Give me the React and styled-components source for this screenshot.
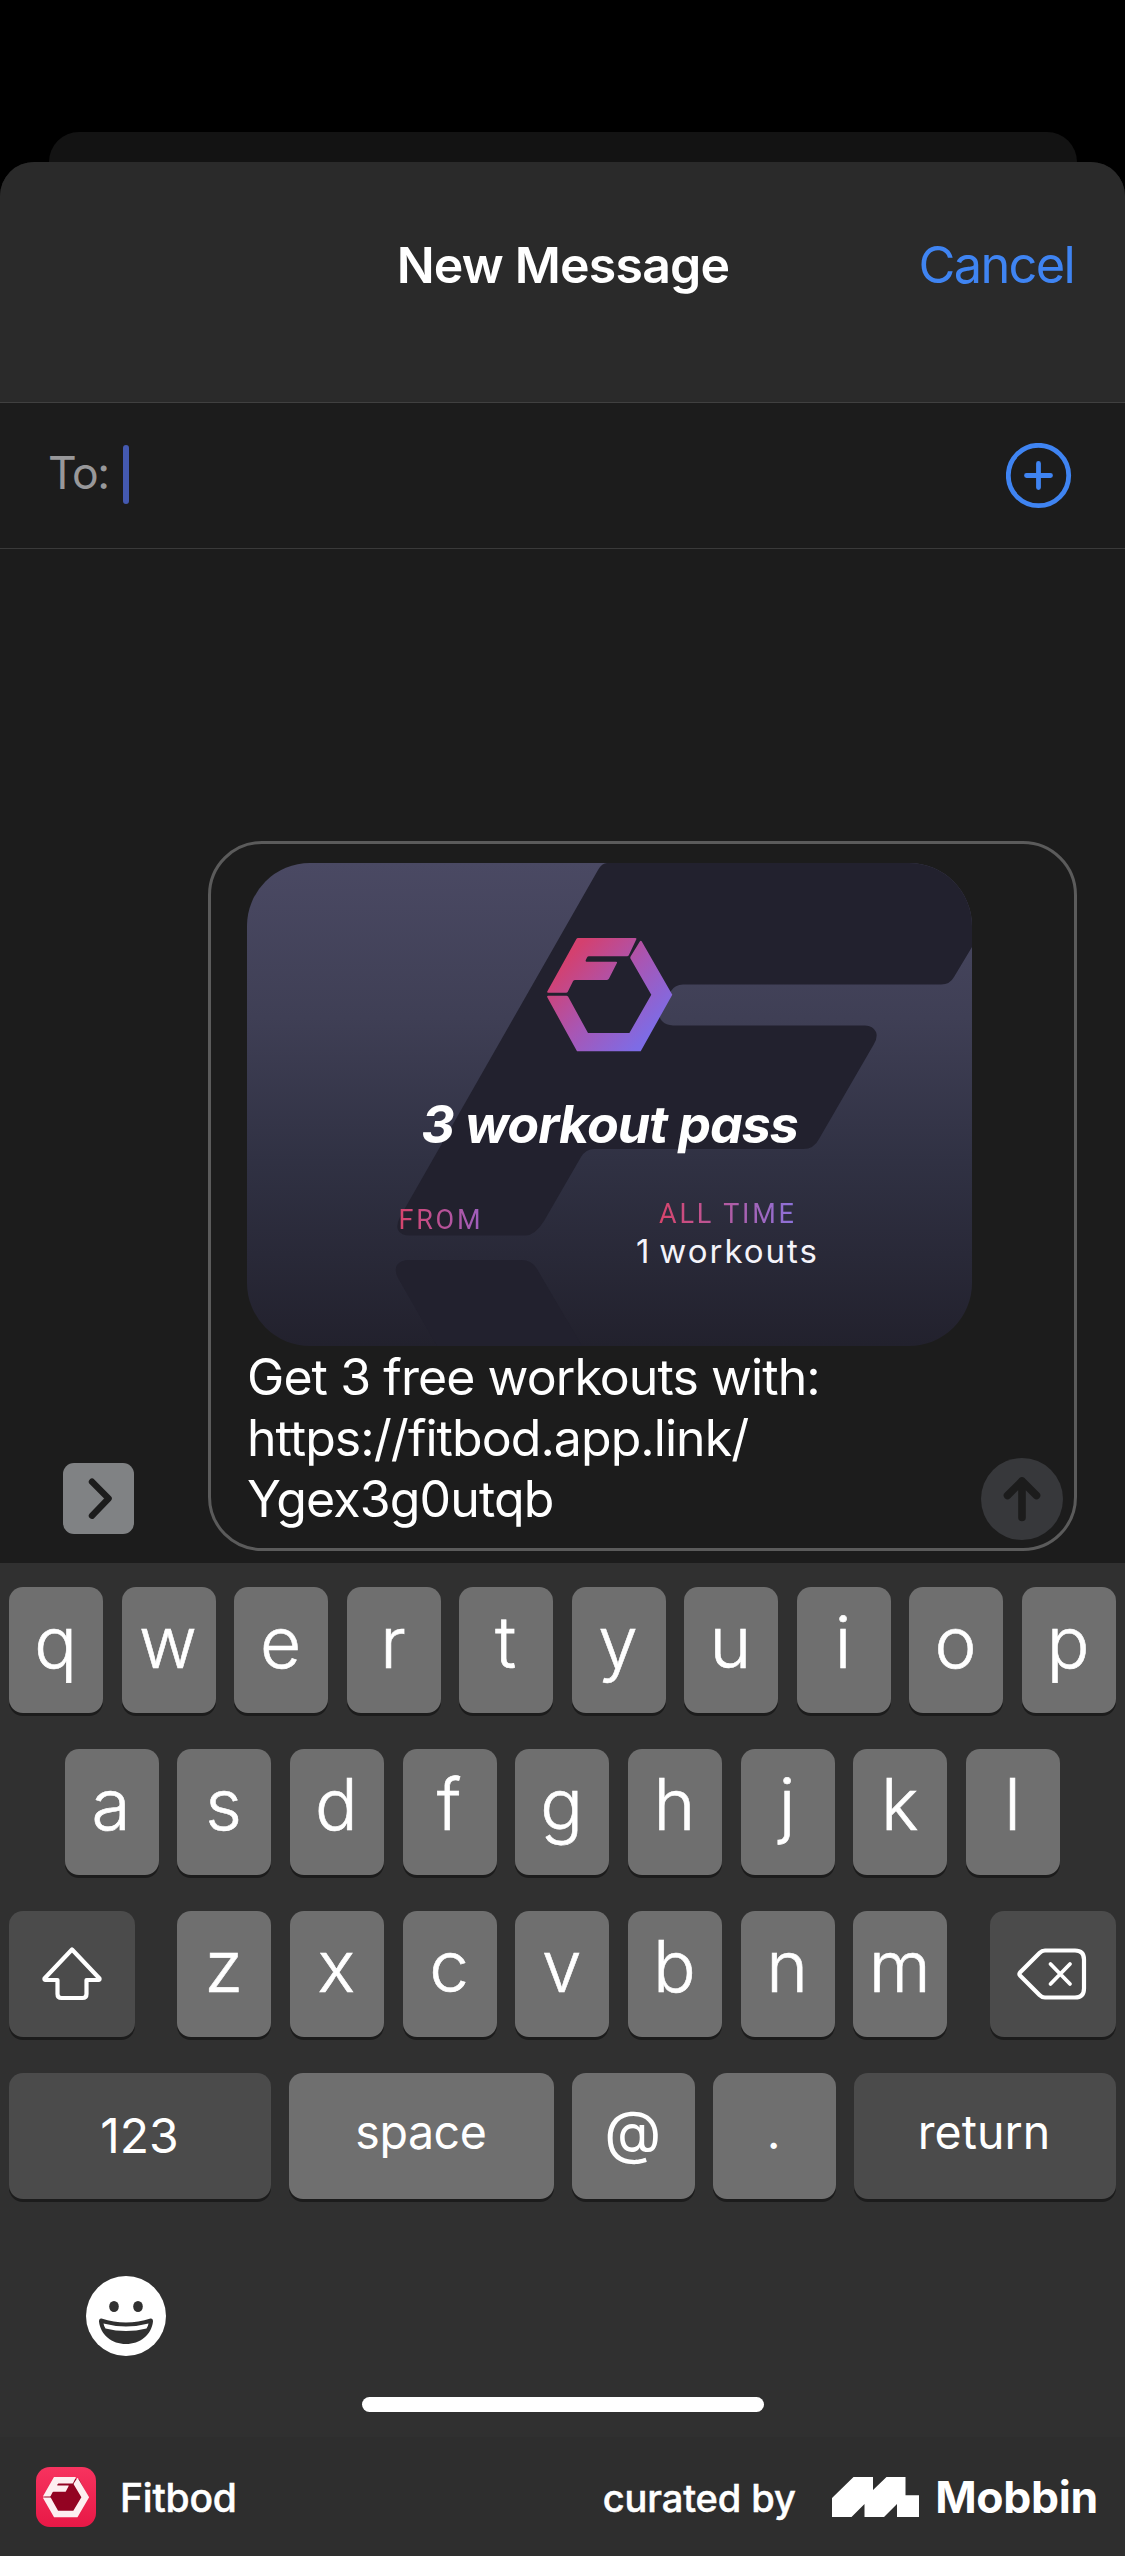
import React from "react";
import styled, { createGlobalStyle } from "styled-components";

const GlobalStyle = createGlobalStyle`
  *, *::before, *::after { box-sizing: border-box; }
  html, body { margin: 0; padding: 0; background: #000; }
  body { font-family: Inter, "Liberation Sans", sans-serif; -webkit-font-smoothing: antialiased; }
  button { font: inherit; color: inherit; border: 0; padding: 0; margin: 0; background: none; }
  svg { display: block; }
`;

const Screen = styled.div`
  width: 1125px;
  height: 2556px;
  background: #000;
  display: flex;
  flex-direction: column;
  padding-top: 132px;
  overflow: hidden;
`;

const BackCard = styled.div`
  flex: none;
  height: 70px;
  margin: 0 48px -40px 49px;
  border-radius: 30px 30px 0 0;
  background: #131313;
`;

const Sheet = styled.section`
  flex: 1;
  display: flex;
  flex-direction: column;
  position: relative;
  background: #1c1c1c;
  border-radius: 34px 34px 0 0;
  overflow: hidden;
`;

const Header = styled.header`
  height: 241px;
  padding: 73px 50px 0;
  display: grid;
  grid-template-columns: 1fr auto 1fr;
  align-items: start;
  background: #2a2a2a;
  border-bottom: 1px solid #404040;
`;

const Title = styled.h1`
  grid-column: 2;
  margin: 0;
  padding-left: 1px;
  font-size: 50px;
  line-height: 60px;
  font-weight: 600;
  letter-spacing: -0.8px;
  color: #fff;
`;

const Cancel = styled.button`
  justify-self: end;
  padding-right: 1px;
  font-size: 50.5px;
  line-height: 60px;
  letter-spacing: -1.7px;
  color: #3f84f2;
`;

const Recipients = styled.div`
  height: 146px;
  padding: 0 53px 0 48px;
  display: flex;
  align-items: center;
  border-bottom: 1px solid #3a3a3a;
`;

const ToLabel = styled.span`
  font-size: 44.5px;
  line-height: 52px;
  padding-bottom: 6px;
  letter-spacing: -1.3px;
  color: #98989a;
`;

const Caret = styled.span`
  width: 6px;
  height: 59px;
  margin: 0 auto 3px 14px;
  border-radius: 3px;
  background: #4459b0;
`;

const Thread = styled.main`
  height: 1014px;
  padding: 0 48px 12px 63px;
  display: flex;
  align-items: flex-end;
  justify-content: space-between;
`;

const Expand = styled.button`
  width: 71px;
  height: 71px;
  margin-bottom: 17px;
  border-radius: 11px;
  background: #808284;
`;

const Bubble = styled.div`
  width: 869px;
  height: 710px;
  padding: 19px 11px 8px 36px;
  border: 3px solid #5b5b5b;
  border-radius: 54px;
`;

const Pass = styled.article`
  position: relative;
  width: 725px;
  height: 483px;
  padding-top: 75px;
  border-radius: 63px;
  overflow: hidden;
  background: linear-gradient(#4a4963 0%, #3f3f55 32%, #303143 62%, #22212d 100%);
`;

const PassArt = styled.svg`
  position: absolute;
  inset: 0;
`;

const PassBody = styled.div`
  position: relative;
`;

const PassLogo = styled.svg`
  margin: 0 0 43px 299.5px;
`;

const PassTitle = styled.h2`
  margin: 0;
  text-align: center;
  font-size: 52px;
  line-height: 60px;
  font-weight: 700;
  font-style: italic;
  letter-spacing: -1.1px;
  color: #fff;
`;

const Stats = styled.div`
  display: grid;
  grid-template-columns: 287px 287px;
  margin: 44px 0 0 49px;
`;

const Stat = styled.div`
  display: flex;
  flex-direction: column;
  align-items: center;
  padding-top: ${(p) => p.$drop || 0}px;
`;

const StatLabel = styled.span`
  font-family: Roboto, Inter, sans-serif;
  font-size: 27px;
  line-height: 30px;
  letter-spacing: 2.8px;
  margin-right: -2.8px;
  background: linear-gradient(90deg, #d8446b, ${(p) => p.$end});
  background-clip: text;
  -webkit-background-clip: text;
  color: transparent;
`;

const StatValue = styled.span`
  margin-top: 4px;
  font-size: 33px;
  line-height: 36px;
  letter-spacing: 2px;
  word-spacing: -3.5px;
  margin-right: -2px;
  color: #f4f3fa;
`;

const Draft = styled.div`
  display: flex;
  align-items: flex-end;
  justify-content: space-between;
`;

const DraftText = styled.p`
  margin: 0;
  padding: 1px 0 10px;
  font-size: 50px;
  line-height: 61px;
  color: #fff;
`;

const Line = styled.span`
  display: block;
  letter-spacing: ${(p) => p.$track || 0}px;
`;

const Send = styled.button`
  width: 82px;
  height: 82px;
  border-radius: 50%;
  background: #37383b;
`;

const Keyboard = styled.div`
  height: 874px;
  padding-top: 24px;
  background: #303030;
`;

const KeyRow = styled.div`
  display: flex;
  justify-content: space-between;
  height: 126px;
  margin: 0 ${(p) => (p.$inset || 9) + 0.5}px 36px ${(p) => p.$inset || 9}px;
`;

const KeyGroup = styled.div`
  display: flex;
  gap: 18.7px;
`;

const Key = styled.button`
  width: ${(p) => p.$w || 94}px;
  height: 126px;
  padding: 0 1px ${(p) => (p.$lift === undefined ? 16 : p.$lift)}px 0;
  display: flex;
  align-items: center;
  justify-content: center;
  border-radius: 14px;
  background: ${(p) => (p.$dark ? "#4b4b4b" : "#6f6f6f")};
  box-shadow: 0 3px 0 #1c1c1c;
  font-size: ${(p) => p.$size || 71}px;
  font-weight: ${(p) => p.$weight || 300};
  -webkit-text-stroke: ${(p) => (p.$weight ? 0 : 0.6)}px #fff;
  line-height: 1;
  letter-spacing: ${(p) => p.$track || 0}px;
  color: #fff;
`;

const Emoji = styled.svg`
  margin: 77px 0 41px 86px;
`;

const HomeBar = styled.div`
  width: 402px;
  height: 15px;
  margin: 0 auto;
  border-radius: 8px;
  background: #fff;
`;

const Footer = styled.footer`
  height: 119px;
  padding: 0 27px 0 36px;
  display: flex;
  align-items: center;
  background: #2e2e2e;
  color: #fff;
`;

const AppName = styled.span`
  margin: 3px auto 0 24px;
  font-size: 39px;
  line-height: 46px;
  font-weight: 500;
  letter-spacing: -0.2px;
  -webkit-text-stroke: 0.5px #fff;
`;

const Curated = styled.span`
  margin: 3px 36.5px 0 0;
  font-size: 38px;
  line-height: 46px;
  font-weight: 500;
  letter-spacing: -0.1px;
  -webkit-text-stroke: 0.5px #fff;
`;

const Brand = styled.span`
  margin: 0 0 0 16px;
  font-size: 44.5px;
  line-height: 52px;
  font-weight: 700;
  letter-spacing: -0.3px;
`;

const F_PART =
  "M31 0H88.2Q90 0 89.2 1.6L81.8 17.2Q81.2 18.3 80 18.3H42Q40.6 18.3 40 19.6L38.8 22Q38.2 23.7 39.6 23.7H69Q70.6 23.7 69.8 25.2L61.9 40.8Q61.3 41.9 60 41.9H28.2Q26.7 41.9 26 43.2L20.8 53.8Q20.3 54.8 19 54.8H1.2Q-.4 54.8 .4 53.2L29.4 1Q30 0 31 0Z";
const RING_PART =
  "M1.2 57.8H19.4Q20.6 57.8 21.2 58.8L41 95H82.4L104.3 56.8L83.6 20.8Q83 19.6 83.6 18.6L92.8 3.4Q93.8 2 94.8 3.4L125.3 56.8L93.7 113.2H30L.4 59.6Q-.4 57.8 1.2 57.8Z";

const HexMark = () => (
  <PassLogo width="126" height="114" viewBox="0 0 126 114">
    <defs>
      <linearGradient id="hex" gradientUnits="userSpaceOnUse" x1="22" y1="18" x2="104" y2="96">
        <stop offset="0" stopColor="#d4406f" />
        <stop offset="0.5" stopColor="#a856b4" />
        <stop offset="1" stopColor="#7d6ce6" />
      </linearGradient>
    </defs>
    <path fill="url(#hex)" d={F_PART} />
    <path fill="url(#hex)" d={RING_PART} />
  </PassLogo>
);

const PlusCircle = () => (
  <svg width="66" height="66" viewBox="0 0 66 66" fill="none" stroke="#3f84f2" strokeLinecap="round">
    <circle cx="32.5" cy="32.5" r="30.2" strokeWidth="4.8" />
    <path d="M32.5 20.5V44.5M20.5 32.5H44.5" strokeWidth="4.8" />
  </svg>
);

const FitbodIcon = () => (
  <svg width="60" height="60" viewBox="0 0 60 60">
    <defs>
      <linearGradient id="tile" x1="0" y1="0" x2="0" y2="1">
        <stop offset="0" stopColor="#f7335f" />
        <stop offset="1" stopColor="#e81846" />
      </linearGradient>
    </defs>
    <rect width="60" height="60" rx="14" fill="url(#tile)" />
    <path d="M18 12H43L52 30L42 48H18L8 30Z" fill="#930322" />
    <g transform="translate(7 10) scale(.368 .355)" fill="#fdeef0">
      <path d={F_PART} />
      <path d={RING_PART} />
    </g>
  </svg>
);

const row = (letters) => letters.split("").map((l) => <Key key={l}>{l}</Key>);

export default function App() {
  return (
    <>
      <GlobalStyle />
      <Screen>
        <BackCard />
        <Sheet>
          <Header>
            <Title>New Message</Title>
            <Cancel>Cancel</Cancel>
          </Header>
          <Recipients>
            <ToLabel>To:</ToLabel>
            <Caret />
            <PlusCircle />
          </Recipients>
          <Thread>
            <Expand aria-label="Show apps">
              <svg width="71" height="71" viewBox="0 0 71 71" fill="none" stroke="#1c1c1c" strokeWidth="6.4" strokeLinecap="round" strokeLinejoin="round">
                <path d="M29 18.7L45.6 35.5L29 52.7" />
              </svg>
            </Expand>
            <Bubble>
              <Pass>
                <PassArt width="725" height="483" viewBox="0 0 725 483" fill="#22212e">
                  <path d="M360 0H725V84L707 114Q703 121.5 694 121.5H436Q428 121.5 424 128L415 144Q410 153 415 158Q419 162.4 426 162.4H618Q626 162.4 629 169Q631 174 627 181L572 276Q567 286 556 286H347Q339 286 334 294L297 358Q288 372.6 278 372.6H163Q154 372.6 151 367Q149 362 153 354L351 7Q355 0 360 0Z" />
                  <path d="M162 397H274Q285 397 290 406L335 483H190L151 415Q147 407 150 402Q154 397 162 397Z" />
                </PassArt>
                <PassBody>
                  <HexMark />
                  <PassTitle>3 workout pass</PassTitle>
                  <Stats>
                    <Stat $drop={6}>
                      <StatLabel $end="#9d5fc0">FROM</StatLabel>
                    </Stat>
                    <Stat>
                      <StatLabel $end="#8b73dd">ALL TIME</StatLabel>
                      <StatValue>1 workouts</StatValue>
                    </Stat>
                  </Stats>
                </PassBody>
              </Pass>
              <Draft>
                <DraftText>
                  <Line $track={-0.92}>Get 3 free workouts with:</Line>
                  <Line $track={-0.95}>https://fitbod.app.link/</Line>
                  <Line $track={-0.85}>Ygex3g0utqb</Line>
                </DraftText>
                <Send aria-label="Send">
                  <svg width="82" height="82" viewBox="0 0 82 82" fill="none" stroke="#1c1c1c" strokeWidth="7.6" strokeLinecap="round" strokeLinejoin="round">
                    <path d="M41 23V59.5M26.5 37.5L41 23L55.5 37.5" />
                  </svg>
                </Send>
              </Draft>
            </Bubble>
          </Thread>
          <Keyboard>
            <KeyRow>{row("qwertyuiop")}</KeyRow>
            <KeyRow $inset={64.5}>{row("asdfghjkl")}</KeyRow>
            <KeyRow>
              <Key $w={126} $dark $lift={0} aria-label="Shift">
                <svg width="60" height="54" viewBox="0 0 60 54" fill="none" stroke="#fff" strokeWidth="4.2" strokeLinejoin="round">
                  <path d="M30 2.5L57.5 31.5Q57.8 33 56.5 33H44.5V47Q44.5 51 40.5 51H19.5Q15.5 51 15.5 47V33H3.5Q2.2 33 2.5 31.5Z" />
                </svg>
              </Key>
              <KeyGroup>{row("zxcvbnm")}</KeyGroup>
              <Key $w={126} $dark $lift={0} aria-label="Delete">
                <svg width="70" height="52" viewBox="0 0 70 52" fill="none" stroke="#fff" strokeWidth="4.2" strokeLinejoin="round" strokeLinecap="round">
                  <path d="M28 2.5H58Q67 2.5 67 11.5V40.5Q67 49.5 58 49.5H28Q25 49.5 22.5 47L3 27.5Q1.8 26 3 24.5L22.5 5Q25 2.5 28 2.5Z" />
                  <path d="M33.5 16L53 36M53 16L33.5 36" strokeWidth="3.8" />
                </svg>
              </Key>
            </KeyRow>
            <KeyRow>
              <Key $w={262} $dark $size={48} $weight={400} $lift={1}>123</Key>
              <Key $w={265} $size={46.5} $weight={400} $lift={8} $track={-0.4}>space</Key>
              <Key $w={123} $size={59} $weight={400} $lift={9}>@</Key>
              <Key $w={123} $size={48} $weight={400} $lift={8}>.</Key>
              <Key $w={262} $dark $size={46.5} $weight={400} $lift={8}>return</Key>
            </KeyRow>
            <Emoji width="80" height="80" viewBox="0 0 80 80">
              <circle cx="40" cy="40" r="40" fill="#fff" />
              <g fill="#303030">
                <ellipse cx="28" cy="30.5" rx="4.8" ry="5.6" />
                <ellipse cx="52" cy="30.5" rx="4.8" ry="5.6" />
                <path d="M15.5 42.5Q40 50.5 64.5 42.5Q67 42.2 67 45.5C65.5 59 54 68 40 68S14.500 59 13 45.5Q13 42.2 15.5 42.5Z" />
              </g>
              <path fill="#fff" d="M17.5 47.5Q40 53.5 62.5 47.5Q62 50.5 60.5 52.5Q40 57.5 19.5 52.5Q18 50.5 17.5 47.5Z" />
            </Emoji>
            <HomeBar />
          </Keyboard>
          <Footer>
            <FitbodIcon />
            <AppName>Fitbod</AppName>
            <Curated>curated by</Curated>
            <svg width="87" height="40" viewBox="0 0 87 40" fill="#fff">
              <path d="M0 21L21.5 0H41V13L54.5 0H73.5V18.3H87V40H65V27L52 40H32.5V27L19.5 40H0Z" />
            </svg>
            <Brand>Mobbin</Brand>
          </Footer>
        </Sheet>
      </Screen>
    </>
  );
}
